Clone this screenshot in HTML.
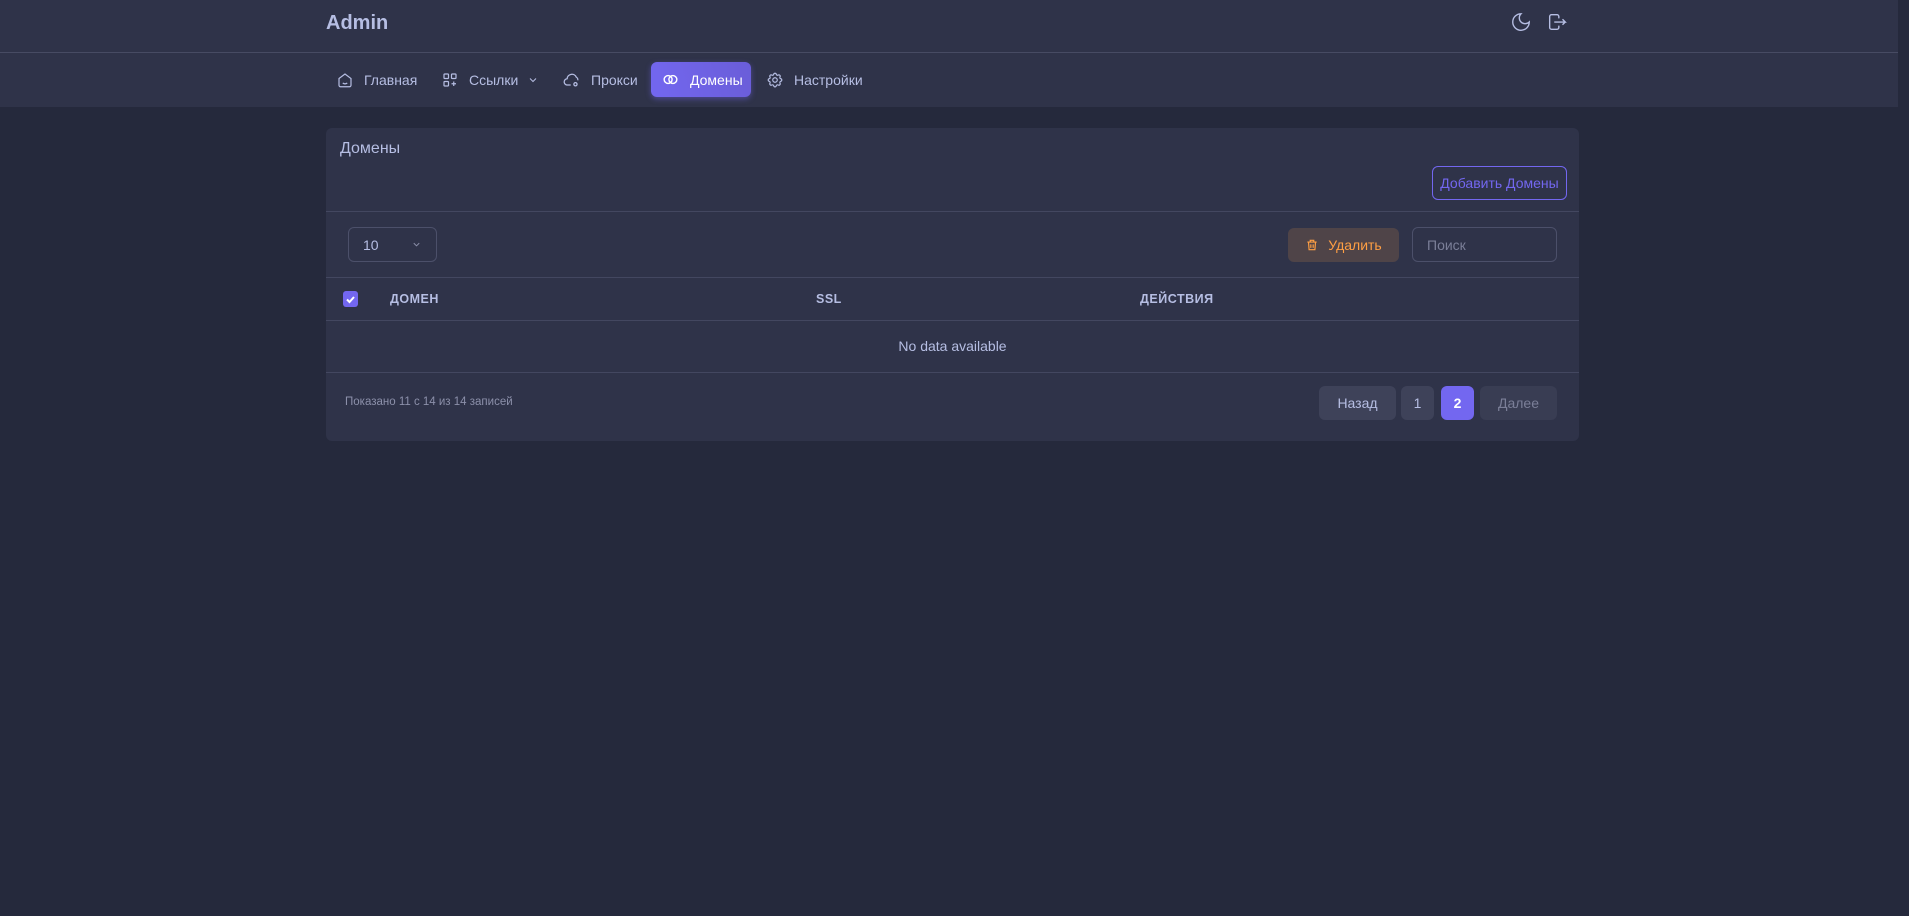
<!DOCTYPE html>
<html><head><meta charset="utf-8"><style>
*{box-sizing:border-box;margin:0;padding:0}
body{width:1909px;height:916px;background:#25293c;font-family:"Liberation Sans",sans-serif;color:#b6bee3;position:relative;overflow:hidden}
.abs{position:absolute}
.hdr{left:0;top:0;width:1898px;height:107px;background:#2f3349}
.hline{left:0;top:52px;width:1898px;height:1px;background:#474b63}
.nav{top:62px;height:35px;display:flex;align-items:center;font-size:14px;color:#b6bee3;white-space:nowrap}
.nav svg{margin-right:10px}
.card{left:326px;top:128px;width:1253px;height:313px;background:#2f3349;border-radius:6px}
.ln{position:absolute;left:0;width:100%;height:1px;background:#434760}
.btn{position:absolute;border-radius:6px;display:flex;align-items:center;justify-content:center;font-size:14px;white-space:nowrap}
.th{position:absolute;top:164px;font-size:12.5px;font-weight:bold;color:#b6bee3;letter-spacing:.5px}
</style></head><body>
<div class="abs hdr"></div>
<div class="abs hline"></div>
<div class="abs" style="left:326px;top:12px;font-size:20px;font-weight:bold;color:#b6bee3">Admin</div>
<svg class="abs" style="left:1510px;top:11px" width="22" height="22" viewBox="0 0 24 24" fill="none" stroke="#b6bee3" stroke-width="1.5"><path d="M12 3a6 6 0 0 0 9 9 9 9 0 1 1-9-9z"/></svg>
<svg class="abs" style="left:1546px;top:11px" width="22" height="22" viewBox="0 0 24 24" fill="none" stroke="#b6bee3" stroke-width="1.5"><path d="M14 8V6a2 2 0 0 0-2-2H6a2 2 0 0 0-2 2v12a2 2 0 0 0 2 2h6a2 2 0 0 0 2-2v-2M9 12h12l-3-3m0 6l3-3"/></svg>

<div class="abs nav" style="left:336px"><svg width="18" height="18" viewBox="0 0 24 24" fill="none" stroke="#b6bee3" stroke-width="1.6"><path d="M4 10l8-6 8 6v9a2 2 0 0 1-2 2H6a2 2 0 0 1-2-2z M9 16c2 1.5 4 1.5 6 0"/></svg>Главная</div>
<div class="abs nav" style="left:441px"><svg width="18" height="18" viewBox="0 0 24 24" fill="none" stroke="#b6bee3" stroke-width="1.6"><rect x="4" y="4" width="6" height="6" rx="1"/><rect x="14" y="4" width="6" height="6" rx="1"/><rect x="4" y="14" width="6" height="6" rx="1"/><path d="M14 17h6M17 14v6"/></svg>Ссылки<svg style="margin-left:9px" width="12" height="12" viewBox="0 0 24 24" fill="none" stroke="#b6bee3" stroke-width="2"><path d="M6 9l6 6 6-6"/></svg></div>
<div class="abs nav" style="left:562px"><svg width="19" height="19" viewBox="0 0 24 24" fill="none" stroke="#b6bee3" stroke-width="1.6"><path d="M11 19H7a4 4 0 0 1-.5-8A6 6 0 0 1 18 9a4 4 0 0 1 2 4"/><circle cx="17" cy="18" r="2"/></svg>Прокси</div>
<div class="abs" style="left:651px;top:62px;width:100px;height:35px;border-radius:6px;background:linear-gradient(72deg,#7367f0,#6a5dd8);box-shadow:0 2px 6px rgba(115,103,240,.45)"></div>
<div class="abs nav" style="left:661px;color:#fff"><svg width="19" height="19" viewBox="0 0 24 24" fill="none" stroke="#fff" stroke-width="1.8"><circle cx="9" cy="12" r="5"/><circle cx="15" cy="12" r="5"/></svg>Домены</div>
<div class="abs nav" style="left:766px"><svg width="18" height="18" viewBox="0 0 24 24" fill="none" stroke="#b6bee3" stroke-width="1.6"><path d="M10.3 4.3c.4-1.8 3-1.8 3.4 0a1.7 1.7 0 0 0 2.6 1.1c1.5-.9 3.3.8 2.4 2.4a1.7 1.7 0 0 0 1 2.5c1.8.5 1.8 3 0 3.5a1.7 1.7 0 0 0-1 2.5c.9 1.6-.9 3.3-2.4 2.4a1.7 1.7 0 0 0-2.6 1c-.4 1.9-3 1.9-3.4 0a1.7 1.7 0 0 0-2.6-1c-1.5.9-3.3-.8-2.4-2.4a1.7 1.7 0 0 0-1-2.5c-1.8-.5-1.8-3 0-3.5a1.7 1.7 0 0 0 1-2.5c-.9-1.6.9-3.3 2.4-2.4a1.7 1.7 0 0 0 2.6-1.1z"/><circle cx="12" cy="12" r="3"/></svg>Настройки</div>

<div class="abs card">
<div class="abs" style="left:14px;top:12px;font-size:16px;color:#b6bee3">Домены</div>
<div class="btn" style="left:1106px;top:38px;width:135px;height:34px;border:1px solid #7367f0;color:#7367f0;font-size:14px">Добавить Домены</div>
<div class="ln" style="top:83px"></div>
<div class="btn" style="left:22px;top:99px;width:89px;height:35px;border:1px solid #4c506a;justify-content:space-between;padding:0 14px;color:#b6bee3">10<svg width="11" height="11" viewBox="0 0 24 24" fill="none" stroke="#8c90aa" stroke-width="2"><path d="M6 9l6 6 6-6"/></svg></div>
<div class="btn" style="left:962px;top:100px;width:111px;height:34px;background:#4f4448;color:#ff9f43"><svg style="margin-right:9px" width="14" height="14" viewBox="0 0 24 24" fill="none" stroke="#ff9f43" stroke-width="2"><path d="M4 7h16M9 7V4h6v3M6 7l1 13h10l1-13M10 11v6M14 11v6"/></svg>Удалить</div>
<div class="btn" style="left:1086px;top:99px;width:145px;height:35px;border:1px solid #4c506a;justify-content:flex-start;padding-left:14px;color:#7b7f98;font-size:14px">Поиск</div>
<div class="ln" style="top:149px"></div>
<div class="abs" style="left:17px;top:163px;width:15px;height:16px;border-radius:3px;background:#7367f0"><svg width="15" height="16" viewBox="0 0 15 16" fill="none" stroke="#fff" stroke-width="2"><path d="M4 8.5l2.5 2.5 4.5-5"/></svg></div>
<div class="th" style="left:64px">ДОМЕН</div>
<div class="th" style="left:490px">SSL</div>
<div class="th" style="left:814px">ДЕЙСТВИЯ</div>
<div class="ln" style="top:192px"></div>
<div class="abs" style="left:0;width:100%;top:210px;text-align:center;font-size:14px;color:#b6bee3">No data available</div>
<div class="ln" style="top:244px"></div>
<div class="abs" style="left:19px;top:268px;font-size:11.5px;color:#8c90aa">Показано 11 с 14 из 14 записей</div>
<div class="btn" style="left:993px;top:258px;width:77px;height:34px;background:#3e4259;color:#b6bee3">Назад</div>
<div class="btn" style="left:1075px;top:258px;width:33px;height:34px;background:#3e4259;color:#b6bee3">1</div>
<div class="btn" style="left:1115px;top:258px;width:33px;height:34px;background:#7367f0;color:#fff;font-weight:bold">2</div>
<div class="btn" style="left:1154px;top:258px;width:77px;height:34px;background:#393d53;color:#7b7f98">Далее</div>
</div>
</body></html>
